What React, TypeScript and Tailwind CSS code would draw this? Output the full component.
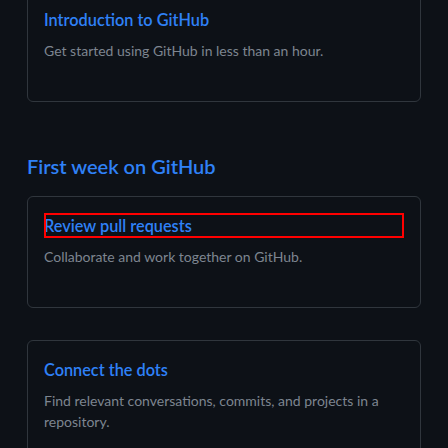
import React from "react";

function Card({ title, desc, outlined }: { title: string; desc: string; outlined?: boolean }) {
  return (
    <div className="border border-[#30363d] rounded-md px-4 pt-4 pb-10">
      <div className={"h-[25px] flex items-center" + (outlined ? " outline-2 outline-[#ff0000] -outline-offset-2" : "")}>
        <span className="text-[16.3px] font-semibold text-[#2f81f7] leading-[25px]">{title}</span>
      </div>
      <p className="mt-2 text-[14px] leading-[21px] text-[#7d8590]">{desc}</p>
    </div>
  );
}

export default function App() {
  return (
    <div className="w-[448px] h-[448px] overflow-hidden bg-[#0d1117] px-[27px] font-['Lato','Noto_Sans',sans-serif]">
      <div className="-mt-[10px]">
        <Card title="Introduction to GitHub" desc="Get started using GitHub in less than an hour." />
      </div>
      <h2 className="mt-[49px] text-[20px] leading-[30px] font-semibold text-[#2f81f7]">First week on GitHub</h2>
      <div className="mt-[15px]">
        <Card title="Review pull requests" desc="Collaborate and work together on GitHub." outlined />
      </div>
      <div className="mt-[32px]">
        <Card
          title="Connect the dots"
          desc="Find relevant conversations, commits, and projects in a repository."
        />
      </div>
    </div>
  );
}
